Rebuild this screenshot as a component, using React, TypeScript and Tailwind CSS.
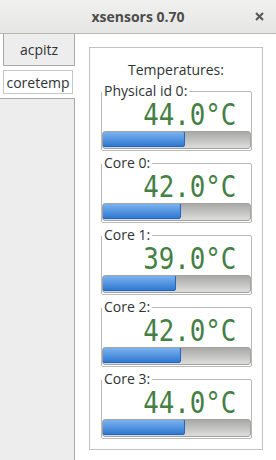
import React from "react";

const sensors = [
  { name: "Physical id 0:", temp: 44.0 },
  { name: "Core 0:", temp: 42.0 },
  { name: "Core 1:", temp: 39.0 },
  { name: "Core 2:", temp: 42.0 },
  { name: "Core 3:", temp: 44.0 },
];

const MAX_TEMP = 80;

const SensorCard = ({ name, temp }: { name: string; temp: number }) => {
  const pct = Math.min(100, (temp / MAX_TEMP) * 100);
  return (
    <fieldset className="w-[151px] border border-[#b9b9b9] rounded-[2px] p-0 m-0">
      <legend className="ml-0 px-[2px] text-[14px] leading-[16px] text-[#2e3436]">
        {name}
      </legend>
      <div className="flex justify-end pr-[15px] h-[31px] pt-[4px]">
        <span className="font-['DejaVu_Sans_Mono',monospace] text-[30px] leading-[24px] h-[24px] text-[#447f44] scale-x-[0.86] origin-right whitespace-nowrap">
          {temp.toFixed(1)}°C
        </span>
      </div>
      <div className="mt-[1px] mb-[1px] h-[18px] rounded-[3px] border border-[#a3a3a1] bg-gradient-to-b from-[#a9aaa7] to-[#dcdcda] overflow-hidden">
        <div
          className="h-full rounded-[2px] border border-[#2466bd] bg-gradient-to-b from-[#7ab2ef] to-[#2f78d2] -m-[1px]"
          style={{ width: `calc(${pct}% + 2px)` }}
        />
      </div>
    </fieldset>
  );
};

export default function App() {
  return (
    <div className="w-[276px] h-[460px] bg-white overflow-hidden font-['Open_Sans',sans-serif] text-[#2e3436]">
      {/* title bar */}
      <div className="relative h-[34px] border-b border-[#b7b7b4] bg-gradient-to-b from-[#f0f0ef] to-[#e6e6e4] flex items-center justify-center">
        <span className="text-[14px] font-bold text-[#4c4c4c]">xsensors 0.70</span>
        <svg
          className="absolute right-[12px] top-[12px]"
          width="9"
          height="9"
          viewBox="0 0 9 9"
        >
          <path d="M1 1L8 8M8 1L1 8" stroke="#555753" strokeWidth="2" />
        </svg>
      </div>

      <div className="flex h-[426px]">
        {/* tabs */}
        <div className="w-[75px] flex flex-col">
          <div className="ml-[3px] h-[32px] border-x border-b border-[#a9a9a7] bg-[#ededed] flex items-center justify-center text-[14px]">
            acpitz
          </div>
          <div className="h-[32px] bg-white pt-[4px] pl-[3px]">
            <div className="w-[70px] h-[24px] border border-[#c6c6c4] flex items-center justify-center text-[14px]">
              coretemp
            </div>
          </div>
          <div className="flex-1 bg-[#ededed] border-t border-r border-[#a9a9a7]" />
        </div>

        {/* page */}
        <div className="flex-1 bg-white pt-[13px] pl-[14px]">
          <div className="w-[174px] h-[403px] border border-[#c2c2c0] flex flex-col">
            <div className="pt-[13px] text-center text-[14px] leading-[17px]">
              Temperatures:
            </div>
            <div className="mt-[5px] ml-[11px] flex flex-col gap-[4px]">
              {sensors.map((s) => (
                <SensorCard key={s.name} name={s.name} temp={s.temp} />
              ))}
            </div>
          </div>
        </div>
      </div>
    </div>
  );
}
